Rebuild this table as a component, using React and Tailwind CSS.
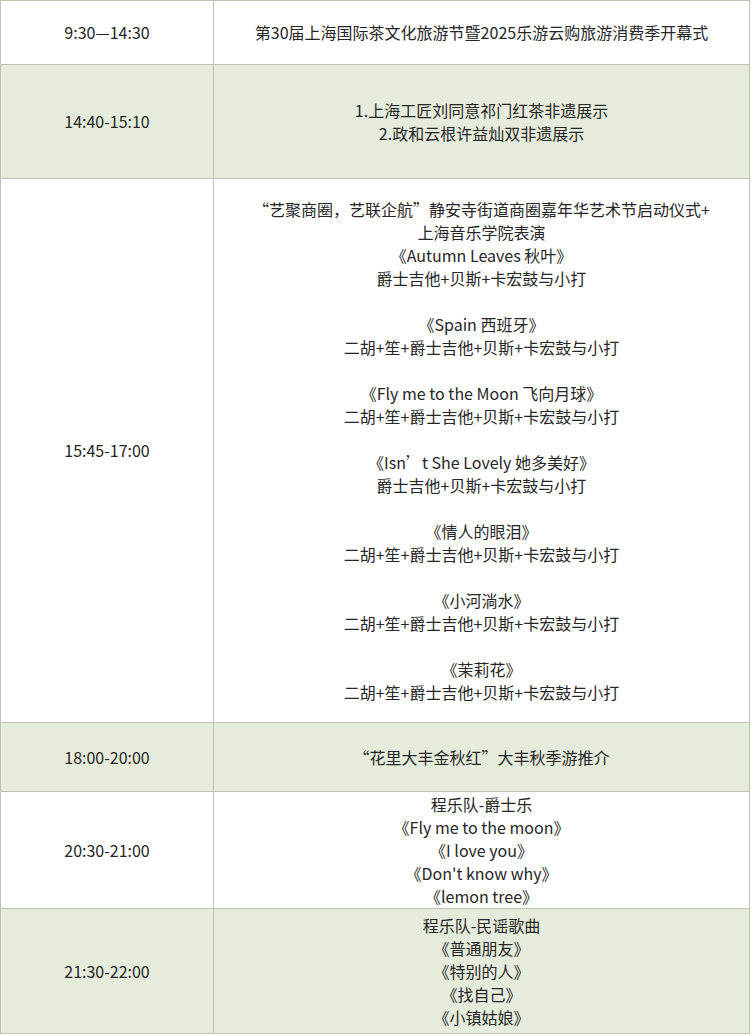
import React from "react";

const rows = [
  { time: "9:30—14:30", h: "h-[64px]", bg: "bg-white", lines: ["第30届上海国际茶文化旅游节暨2025乐游云购旅游消费季开幕式"] },
  { time: "14:40-15:10", h: "h-[114px]", bg: "bg-[#e6ecdc]", lines: ["1.上海工匠刘同意祁门红茶非遗展示", "2.政和云根许益灿双非遗展示"] },
  {
    time: "15:45-17:00",
    h: "h-[544px]",
    bg: "bg-white",
    lines: [
      "“艺聚商圈，艺联企航”静安寺街道商圈嘉年华艺术节启动仪式+",
      "上海音乐学院表演",
      "《Autumn Leaves 秋叶》",
      "爵士吉他+贝斯+卡宏鼓与小打",
      "",
      "《Spain 西班牙》",
      "二胡+笙+爵士吉他+贝斯+卡宏鼓与小打",
      "",
      "《Fly me to the Moon 飞向月球》",
      "二胡+笙+爵士吉他+贝斯+卡宏鼓与小打",
      "",
      "《Isn’t She Lovely 她多美好》",
      "爵士吉他+贝斯+卡宏鼓与小打",
      "",
      "《情人的眼泪》",
      "二胡+笙+爵士吉他+贝斯+卡宏鼓与小打",
      "",
      "《小河淌水》",
      "二胡+笙+爵士吉他+贝斯+卡宏鼓与小打",
      "",
      "《茉莉花》",
      "二胡+笙+爵士吉他+贝斯+卡宏鼓与小打",
    ],
  },
  { time: "18:00-20:00", h: "h-[69px]", bg: "bg-[#e6ecdc]", lines: ["“花里大丰金秋红”大丰秋季游推介"] },
  { time: "20:30-21:00", h: "h-[117px]", bg: "bg-white", lines: ["程乐队-爵士乐", "《Fly me to the moon》", "《I love you》", "《Don't know why》", "《lemon tree》"] },
  { time: "21:30-22:00", h: "h-[125px]", bg: "bg-[#e6ecdc]", lines: ["程乐队-民谣歌曲", "《普通朋友》", "《特别的人》", "《找自己》", "《小镇姑娘》"] },
];

export default function App() {
  return (
    <div
      className="w-[752px] h-[1036px] bg-white text-[#262626]"
      style={{ fontFamily: '"Noto Sans CJK SC", "Noto Sans", sans-serif' }}
    >
      <table className="w-[750px] border-collapse table-fixed text-[16px] leading-[23px]">
        <colgroup>
          <col className="w-[213px]" />
          <col />
        </colgroup>
        <tbody>
          {rows.map((r, i) => (
            <tr key={i} className={`${r.h} ${r.bg}`}>
              <td className="border border-[#bcc4b0] text-center align-middle p-0">{r.time}</td>
              <td className="border border-[#bcc4b0] text-center align-middle p-0">
                {r.lines.map((l, j) => (
                  <div key={j} className="h-[23px] whitespace-nowrap">
                    {l}
                  </div>
                ))}
              </td>
            </tr>
          ))}
        </tbody>
      </table>
    </div>
  );
}
